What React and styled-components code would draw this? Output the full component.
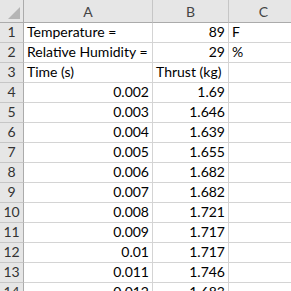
import React from "react";
import styled, { createGlobalStyle } from "styled-components";

const Global = createGlobalStyle`
  html, body { margin: 0; padding: 0; background: #ffffff; }
  body { font-family: Lato, "Liberation Sans", sans-serif; overflow: hidden; }
`;

const Sheet = styled.div`
  display: grid;
  grid-template-columns: 24px 129px 76px 70px;
  grid-auto-rows: 20px;
  grid-template-rows: 23px;
  width: 299px;
  font-size: 14px;
  color: #000;
`;

const Corner = styled.div`
  background: #e6e6e6;
  border-right: 1px solid #ababab;
  border-bottom: 1px solid #ababab;
  box-sizing: border-box;
  display: flex;
  align-items: flex-end;
  justify-content: flex-end;
  padding: 0 3px 3px 0;
`;

const ColHead = styled.div`
  background: #e6e6e6;
  border-right: 1px solid #c6c6c6;
  border-bottom: 1px solid #ababab;
  box-sizing: border-box;
  display: flex;
  align-items: center;
  justify-content: center;
  color: #444;
  font-size: 14px;
  padding-top: 1px;
`;

const RowHead = styled.div`
  background: #e6e6e6;
  border-right: 1px solid #ababab;
  border-bottom: 1px solid #c6c6c6;
  box-sizing: border-box;
  display: flex;
  align-items: flex-end;
  justify-content: center;
  color: #333;
  padding-bottom: 1px;
  line-height: 18px;
`;

const Cell = styled.div`
  border-right: 1px solid #d4d4d4;
  border-bottom: 1px solid #d4d4d4;
  box-sizing: border-box;
  display: flex;
  align-items: flex-end;
  justify-content: ${(p) => (p.$num ? "flex-end" : "flex-start")};
  padding: 0 3px 1px 3px;
  line-height: 18px;
  white-space: nowrap;
  overflow: visible;
`;

const rows = [
  ["Temperature =", "89", "F"],
  ["Relative Humidity =", "29", "%"],
  ["Time (s)", "Thrust (kg)", ""],
  ["0.002", "1.69"],
  ["0.003", "1.646"],
  ["0.004", "1.639"],
  ["0.005", "1.655"],
  ["0.006", "1.682"],
  ["0.007", "1.682"],
  ["0.008", "1.721"],
  ["0.009", "1.717"],
  ["0.01", "1.717"],
  ["0.011", "1.746"],
  ["0.012", "1.683"],
];

export default function App() {
  return (
    <>
      <Global />
      <Sheet>
        <Corner>
          <svg width="12" height="12" viewBox="0 0 12 12">
            <polygon points="12,0 12,12 0,12" fill="#b5b5b5" />
          </svg>
        </Corner>
        <ColHead>A</ColHead>
        <ColHead>B</ColHead>
        <ColHead>C</ColHead>
        {rows.map((r, i) => (
          <React.Fragment key={i}>
            <RowHead>{i + 1}</RowHead>
            <Cell $num={i >= 3}>{r[0]}</Cell>
            <Cell $num={i !== 2}>{r[1]}</Cell>
            <Cell>{r[2] || ""}</Cell>
          </React.Fragment>
        ))}
      </Sheet>
    </>
  );
}
